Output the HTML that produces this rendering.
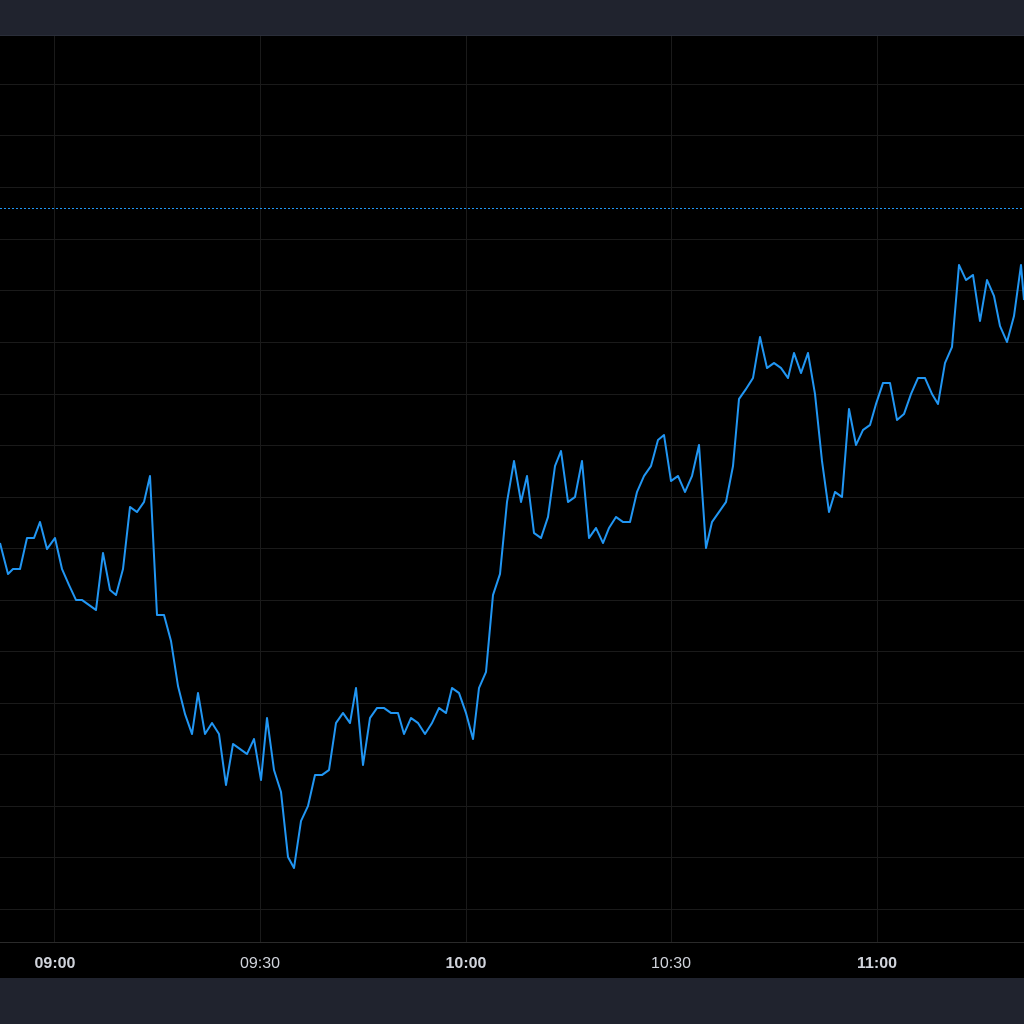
<!DOCTYPE html>
<html><head><style>
html,body{margin:0;padding:0;background:#000;width:1024px;height:1024px;overflow:hidden}
.top{position:absolute;left:0;top:0;width:1024px;height:35px;background:#20232e;border-bottom:1px solid #2a2e39}
.bot{position:absolute;left:0;top:978px;width:1024px;height:46px;background:#20232e}
svg{position:absolute;left:0;top:0}
text{font-family:"Liberation Sans",sans-serif;font-size:16px;fill:#d1d4dc}
</style></head><body>
<div class="top"></div>
<svg width="1024" height="1024">
<g stroke="#1a1a1a" stroke-width="1">
<line x1="0" y1="84.5" x2="1024" y2="84.5"/><line x1="0" y1="135.5" x2="1024" y2="135.5"/><line x1="0" y1="187.5" x2="1024" y2="187.5"/><line x1="0" y1="239.5" x2="1024" y2="239.5"/><line x1="0" y1="290.5" x2="1024" y2="290.5"/><line x1="0" y1="342.5" x2="1024" y2="342.5"/><line x1="0" y1="394.5" x2="1024" y2="394.5"/><line x1="0" y1="445.5" x2="1024" y2="445.5"/><line x1="0" y1="497.5" x2="1024" y2="497.5"/><line x1="0" y1="548.5" x2="1024" y2="548.5"/><line x1="0" y1="600.5" x2="1024" y2="600.5"/><line x1="0" y1="651.5" x2="1024" y2="651.5"/><line x1="0" y1="703.5" x2="1024" y2="703.5"/><line x1="0" y1="754.5" x2="1024" y2="754.5"/><line x1="0" y1="806.5" x2="1024" y2="806.5"/><line x1="0" y1="857.5" x2="1024" y2="857.5"/><line x1="0" y1="909.5" x2="1024" y2="909.5"/>
<line x1="54.5" y1="36" x2="54.5" y2="942"/><line x1="260.5" y1="36" x2="260.5" y2="942"/><line x1="466.5" y1="36" x2="466.5" y2="942"/><line x1="671.5" y1="36" x2="671.5" y2="942"/><line x1="877.5" y1="36" x2="877.5" y2="942"/>
</g>
<line x1="0" y1="942.5" x2="1024" y2="942.5" stroke="#2a2a2a"/>
<line x1="0" y1="208.5" x2="1024" y2="208.5" stroke="#2196f3" stroke-width="1" stroke-dasharray="2,2"/>
<polyline fill="none" stroke="#2196f3" stroke-width="2" stroke-linejoin="round" points="0,543 8,574 13,569 20,569 27,538 34,538 40,522 47,549 55,538 62,569 69,585 76,600 82,600 89,605 96,610 103,553 110,590 116,595 123,569 130,507 137,512 144,502 150,476 157,615 164,615 171,641 178,686 185,714 192,734 198,693 205,734 212,723 219,734 226,785 233,744 240,749 247,754 254,739 261,780 267,718 274,770 281,792 288,857 294,868 301,821 308,806 315,775 322,775 329,770 336,723 343,713 350,723 356,688 363,765 370,718 377,708 384,708 391,713 398,713 404,734 411,718 418,723 425,734 432,723 439,708 446,713 452,688 459,693 466,713 473,739 479,688 486,672 493,595 500,574 507,502 514,461 521,502 527,476 534,533 541,538 548,517 555,466 561,451 568,502 575,497 582,461 589,538 596,528 603,543 609,528 616,517 623,522 630,522 637,492 644,476 651,466 658,440 664,435 671,481 678,476 685,492 692,476 699,445 706,548 712,522 719,512 726,502 733,466 739,399 746,389 753,378 760,337 767,368 774,363 781,368 788,378 794,353 801,373 808,353 815,394 822,461 829,512 835,492 842,497 849,409 856,445 863,430 870,425 876,404 883,383 890,383 897,420 904,414 911,394 918,378 925,378 932,394 938,404 945,363 952,347 959,265 966,280 973,275 980,321 987,280 994,296 1000,326 1007,342 1014,316 1021,265 1024,300"/>
<text x="55" y="968" text-anchor="middle" font-weight="bold">09:00</text>
<text x="260" y="968" text-anchor="middle">09:30</text>
<text x="466" y="968" text-anchor="middle" font-weight="bold">10:00</text>
<text x="671" y="968" text-anchor="middle">10:30</text>
<text x="877" y="968" text-anchor="middle" font-weight="bold">11:00</text>
</svg>
<div class="bot"></div>
</body></html>
